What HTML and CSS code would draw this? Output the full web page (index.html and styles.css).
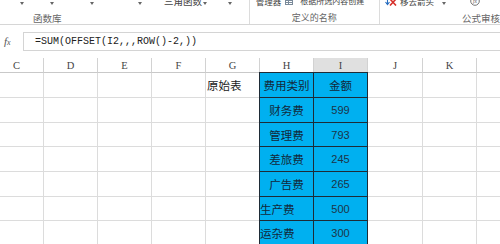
FILE: index.html
```html
<!DOCTYPE html>
<html lang="zh-CN">
<head>
<meta charset="utf-8">
<title>Excel</title>
<link rel="stylesheet" href="styles.css">
</head>
<body>
<div class="ribbon">
  <div class="group g1">
    <div class="top">
      <span class="caret c1"></span>
      <span class="caret c2"></span>
      <span class="caret c3"></span>
      <span class="caret c4"></span>
      <span class="btn trig">三角函数</span>
      <span class="caret c5"></span>
      <span class="caret c6"></span>
    </div>
    <div class="label l1">函数库</div>
  </div>
  <div class="group g2">
    <div class="top">
      <span class="btn mgr">管理器</span>
      <svg class="ico tbl" width="8" height="8" viewBox="0 0 8 8"><rect x="0.5" y="0.5" width="7" height="7" fill="#fff" stroke="#7a8a9a"/><path d="M0.5 3.5H7.5M0.5 5.5H7.5M3.5 0.5V7.5" stroke="#7a8a9a"/></svg>
      <span class="btn create">根据所选内容创建</span>
    </div>
    <div class="label l2">定义的名称</div>
  </div>
  <div class="group g3">
    <div class="top">
      <svg class="ico rm" width="12" height="10" viewBox="0 0 12 10"><path d="M2.5 0V8M0.5 6L2.5 8.5L4.5 6" stroke="#2a6fc0" fill="none" stroke-width="1.1"/><path d="M5 3L11 9.5M11 3L5 9.5" stroke="#d6312b" stroke-width="1.6"/></svg>
      <span class="btn remove">移去箭头</span>
      <span class="caret c7"></span>
      <svg class="ico ev" width="12" height="10" viewBox="0 0 12 10"><circle cx="5" cy="5" r="4.3" fill="none" stroke="#666" stroke-width="0.9"/><text x="5" y="7" font-size="5.5" font-style="italic" text-anchor="middle" fill="#555" font-family="Liberation Serif">fx</text></svg>
    </div>
    <div class="label l3">公式审核</div>
  </div>
</div>

<div class="fbar">
  <div class="fx">f<span class="fxs">x</span></div>
  <div class="finput">=SUM(OFFSET(I2,,,ROW()-2,))</div>
</div>

<div class="sheet">
  <div class="c h">C</div>
  <div class="c h">D</div>
  <div class="c h">E</div>
  <div class="c h">F</div>
  <div class="c h">G</div>
  <div class="c h">H</div>
  <div class="c h sel">I</div>
  <div class="c h">J</div>
  <div class="c h">K</div>
  <div class="c h last"></div>

  <div class="c"></div><div class="c"></div><div class="c"></div><div class="c"></div>
  <div class="c txt">原始表</div>
  <div class="c b bh bt">费用类别</div>
  <div class="c b bt num-cn">金额</div>
  <div class="c"></div><div class="c"></div><div class="c last"></div>

  <div class="c"></div><div class="c"></div><div class="c"></div><div class="c"></div><div class="c"></div>
  <div class="c b bh">财务费</div>
  <div class="c b num">599</div>
  <div class="c"></div><div class="c"></div><div class="c last"></div>

  <div class="c"></div><div class="c"></div><div class="c"></div><div class="c"></div><div class="c"></div>
  <div class="c b bh">管理费</div>
  <div class="c b num">793</div>
  <div class="c"></div><div class="c"></div><div class="c last"></div>

  <div class="c"></div><div class="c"></div><div class="c"></div><div class="c"></div><div class="c"></div>
  <div class="c b bh">差旅费</div>
  <div class="c b num">245</div>
  <div class="c"></div><div class="c"></div><div class="c last"></div>

  <div class="c"></div><div class="c"></div><div class="c"></div><div class="c"></div><div class="c"></div>
  <div class="c b bh">广告费</div>
  <div class="c b num">265</div>
  <div class="c"></div><div class="c"></div><div class="c last"></div>

  <div class="c"></div><div class="c"></div><div class="c"></div><div class="c"></div><div class="c"></div>
  <div class="c b bh left">生产费</div>
  <div class="c b num">500</div>
  <div class="c"></div><div class="c"></div><div class="c last"></div>

  <div class="c"></div><div class="c"></div><div class="c"></div><div class="c"></div><div class="c"></div>
  <div class="c b bh left">运杂费</div>
  <div class="c b num">300</div>
  <div class="c"></div><div class="c"></div><div class="c last"></div>
</div>
</body>
</html>
```
FILE: styles.css
```css
* { box-sizing: border-box; margin: 0; padding: 0; }
html, body { width: 500px; height: 244px; overflow: hidden; background: #fff; }
body { font-family: "Noto Sans CJK SC", "Liberation Sans", sans-serif; color: #222; }

/* ribbon */
.ribbon { display: flex; height: 25px; border-bottom: 1px solid #d6d6d6; background: #fff; overflow: hidden; }
.group { display: flex; flex-direction: column; height: 24px; border-right: 1px solid #dcdcdc; }
.g1 { width: 257px; }
.g2 { width: 134px; }
.g3 { flex: 1; border-right: none; }
.top { display: flex; align-items: flex-start; height: 12px; margin-top: -5px; font-size: 9px; line-height: 12px; color: #444; white-space: nowrap; }
.label { height: 17px; padding-top: 4px; line-height: 14px; font-size: 9px; color: #666; white-space: nowrap; overflow: hidden; }
.l1 { padding-left: 33px; font-size: 9.5px; }
.l2 { text-align: center; }
.l3 { padding-left: 82px; font-size: 9.5px; }

.caret { width: 0; height: 0; border-left: 2.5px solid transparent; border-right: 2.5px solid transparent; border-top: 3px solid #666; margin-top: 7px; }
.c1 { margin-left: 20px; }
.c2 { margin-left: 26px; }
.c3 { margin-left: 36px; }
.c4 { margin-left: 44px; }
.trig { margin-left: 22px; font-size: 9.5px; }
.c5 { margin-left: 1px; }
.c6 { margin-left: 21px; }
.mgr { margin-left: 6px; font-size: 8.5px; }
.ico { flex: none; }
.tbl { margin-left: 4px; margin-top: 2px; }
.create { margin-left: 7px; font-size: 8px; }
.rm { margin-left: 5px; margin-top: 1px; }
.remove { margin-left: 3px; font-size: 8.5px; }
.c7 { margin-left: 8px; }
.ev { margin-left: 24px; margin-top: 1px; }

/* formula bar */
.fbar { display: flex; height: 33px; padding-top: 7px; }
.fx { width: 23px; height: 19px; padding-left: 4px; font-family: "Liberation Serif", serif; font-style: italic; font-size: 11px; line-height: 19px; color: #555; }
.fxs { font-size: 8px; }
.finput { flex: 1; height: 19px; border: 1px solid #d4d4d4; border-right: none; padding-left: 11px; font-family: "Liberation Mono", monospace; font-size: 10px; line-height: 17px; color: #222; white-space: nowrap; }

/* sheet */
.sheet { display: grid; margin-left: -10px; grid-template-columns: repeat(7, 54px) 55px 54px 60px; grid-template-rows: 15px 25px 25px 24px 25px 25px 24px 24px; }
.c { display: flex; align-items: center; border-right: 1px solid #dcdcdc; border-bottom: 1px solid #dcdcdc; overflow: hidden; white-space: nowrap; font-size: 11.5px; }
.h { justify-content: center; font-family: "Liberation Serif", serif; font-size: 10.5px; color: #444; border-right-color: #d2d2d2; border-bottom-color: #c9c9c9; }
.h.sel { background: #e0e0e0; }
.last { border-right: none; }
.txt { padding-left: 1px; color: #222; }

.b { background: #00b0f0; justify-content: center; color: #13283a; border-right-color: #1e2b36; border-bottom-color: #1e2b36; }
.bh { box-shadow: -1px 0 0 #1e2b36; }
.bt { box-shadow: 0 -1px 0 #1e2b36; }
.bh.bt { box-shadow: -1px 0 0 #1e2b36, 0 -1px 0 #1e2b36, -1px -1px 0 #1e2b36; }
.left { justify-content: flex-start; }
.num { font-family: "Liberation Sans", sans-serif; font-size: 11px; color: #1d3448; }
```
